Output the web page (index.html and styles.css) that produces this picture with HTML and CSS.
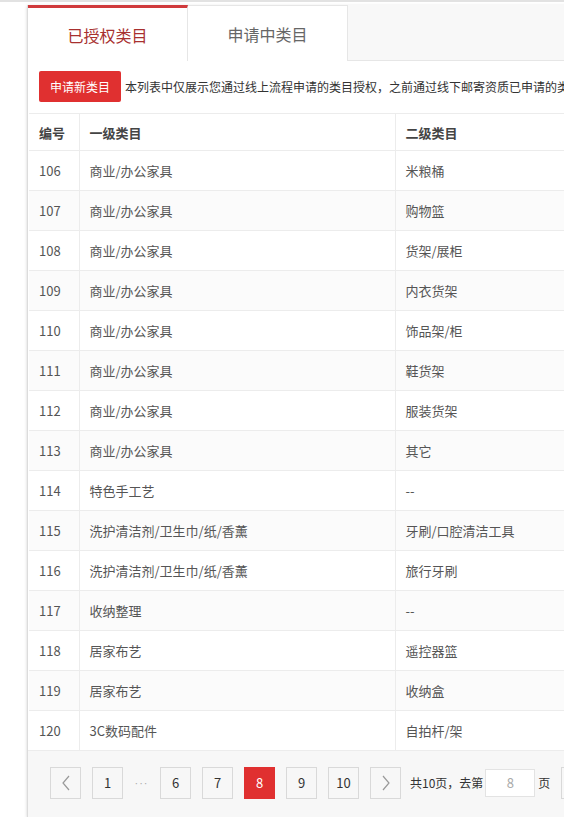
FILE: index.html
```html
<!DOCTYPE html>
<html lang="zh-CN">
<head>
<meta charset="utf-8">
<title>类目管理</title>
<link rel="stylesheet" href="styles.css">
</head>
<body>
<div class="page">
  <div class="panel">
    <div class="tabs">
      <div class="tab tab-active">已授权类目</div>
      <div class="tab">申请中类目</div>
      <div class="tab-fill"></div>
    </div>
    <div class="content">
      <div class="toolbar">
        <button class="btn-apply">申请新类目</button>
        <span class="note">本列表中仅展示您通过线上流程申请的类目授权，之前通过线下邮寄资质已申请的类</span>
      </div>
      <table class="grid">
        <colgroup>
          <col class="c-id"><col class="c-first"><col class="c-second">
        </colgroup>
        <thead>
          <tr><th>编号</th><th>一级类目</th><th>二级类目</th></tr>
        </thead>
        <tbody>
          <tr><td>106</td><td>商业/办公家具</td><td>米粮桶</td></tr>
          <tr><td>107</td><td>商业/办公家具</td><td>购物篮</td></tr>
          <tr><td>108</td><td>商业/办公家具</td><td>货架/展柜</td></tr>
          <tr><td>109</td><td>商业/办公家具</td><td>内衣货架</td></tr>
          <tr><td>110</td><td>商业/办公家具</td><td>饰品架/柜</td></tr>
          <tr><td>111</td><td>商业/办公家具</td><td>鞋货架</td></tr>
          <tr><td>112</td><td>商业/办公家具</td><td>服装货架</td></tr>
          <tr><td>113</td><td>商业/办公家具</td><td>其它</td></tr>
          <tr><td>114</td><td>特色手工艺</td><td>--</td></tr>
          <tr><td>115</td><td>洗护清洁剂/卫生巾/纸/香薰</td><td>牙刷/口腔清洁工具</td></tr>
          <tr><td>116</td><td>洗护清洁剂/卫生巾/纸/香薰</td><td>旅行牙刷</td></tr>
          <tr><td>117</td><td>收纳整理</td><td>--</td></tr>
          <tr><td>118</td><td>居家布艺</td><td>遥控器篮</td></tr>
          <tr><td>119</td><td>居家布艺</td><td>收纳盒</td></tr>
          <tr><td>120</td><td>3C数码配件</td><td>自拍杆/架</td></tr>
        </tbody>
      </table>
      <div class="pager">
        <span class="pg pg-arrow"><svg width="10" height="16" viewBox="0 0 10 16"><path d="M8 1 L2 8 L8 15" fill="none" stroke="#999" stroke-width="1.2"/></svg></span>
        <span class="pg">1</span>
        <span class="pg-dots">···</span>
        <span class="pg">6</span>
        <span class="pg">7</span>
        <span class="pg pg-cur">8</span>
        <span class="pg">9</span>
        <span class="pg">10</span>
        <span class="pg pg-arrow"><svg width="10" height="16" viewBox="0 0 10 16"><path d="M2 1 L8 8 L2 15" fill="none" stroke="#999" stroke-width="1.2"/></svg></span>
        <span class="pg-jump">
          <span class="pg-text">共10页，去第</span>
          <span class="pg-input">8</span>
          <span class="pg-text">页</span>
        </span>
        <span class="pg pg-ok"></span>
      </div>
    </div>
  </div>
</div>
</body>
</html>
```

FILE: styles.css
```css
html, body {
  margin: 0;
  padding: 0;
  overflow: hidden;
  background: #fff;
}
body {
  border-top: 2px solid #e2e2e2;
  font-family: "Noto Sans CJK SC", "Microsoft YaHei", sans-serif;
  color: #555;
}
.page {
  padding-left: 27px;
  padding-top: 3px;
  width: 1000px;
}
.panel {
  width: 940px;
  border-left: 1px solid #dcdcdc;
  box-shadow: 0 1px 3px rgba(0,0,0,0.18);
  background: #fff;
}
.tabs {
  display: flex;
  height: 55px;
  background: #f8f8f8;
  border-bottom: 1px solid #e6e6e6;
}
.tab {
  width: 160px;
  background: #fff;
  display: flex;
  align-items: center;
  justify-content: center;
  font-size: 16px;
  color: #666;
  border-top: 1px solid #e6e6e6;
  border-right: 1px solid #e6e6e6;
  box-sizing: border-box;
  height: 56px;
}
.tab-active {
  border-top: 3px solid #d03a3c;
  color: #a8302f;
}
.tab-fill {
  flex: 1;
}
.content {
  padding-top: 10px;
}
.toolbar {
  display: flex;
  align-items: center;
  gap: 4px;
  padding-left: 11px;
  height: 31px;
}
.btn-apply {
  height: 31px;
  width: 82px;
  border: none;
  border-radius: 2px;
  background: #e03030;
  color: #fff;
  font-family: inherit;
  font-size: 12px;
  padding: 0;
}
.note {
  font-size: 12px;
  color: #333;
  white-space: nowrap;
}
.grid {
  margin-top: 11px;
  width: 100%;
  border-collapse: collapse;
  font-size: 13px;
  color: #555;
  margin-left: 1px;
}
.c-id { width: 50px; }
.c-first { width: 316px; }
.grid th, .grid td {
  text-align: left;
  padding: 0 10px;
  border-top: 1px solid #ececec;
  border-right: 1px solid #ececec;
}
.grid th {
  height: 36px;
  color: #444;
  font-weight: bold;
}
.grid td {
  height: 39px;
}
.grid tbody tr:nth-child(even) td {
  background: #fbfbfb;
}
.pager {
  display: flex;
  align-items: center;
  gap: 11px;
  background: #f7f7f7;
  border-top: 1px solid #ececec;
  padding: 15px 0 18px 22px;
  height: 33px;
}
.pg {
  width: 31px;
  height: 32px;
  box-sizing: border-box;
  border: 1px solid #d9d9d9;
  background: #f7f7f7;
  display: flex;
  align-items: center;
  justify-content: center;
  font-size: 13px;
  color: #333;
  flex-shrink: 0;
}
.pg-cur {
  background: #e03030;
  border-color: #e03030;
  color: #fff;
}
.pg-dots {
  font-family: "Liberation Sans", sans-serif;
  color: #aaa;
  font-size: 11px;
  letter-spacing: 1px;
  width: 15px;
  flex-shrink: 0;
  text-align: center;
  white-space: nowrap;
}
.pg-jump {
  display: flex;
  align-items: center;
  gap: 2px;
  margin-left: -2px;
  flex-shrink: 0;
}
.pg-text {
  font-size: 12px;
  color: #333;
  white-space: nowrap;
}
.pg-text:last-child { margin-left: 1px; }
.pg-input {
  width: 50px;
  height: 28px;
  box-sizing: border-box;
  border: 1px solid #e3e3e3;
  background: #fff;
  color: #aaa;
  font-size: 13px;
  display: flex;
  align-items: center;
  justify-content: center;
}
.pg-ok {
  width: 50px;
}
```
